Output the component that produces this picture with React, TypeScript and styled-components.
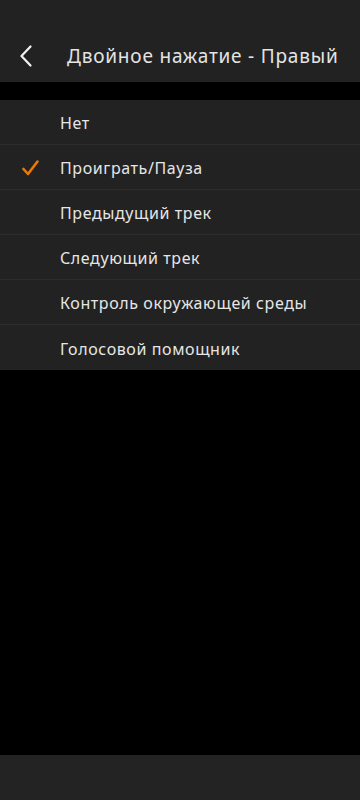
import React from "react";
import styled, { createGlobalStyle } from "styled-components";

const GlobalStyle = createGlobalStyle`
  html, body {
    margin: 0;
    padding: 0;
    background: #000;
  }
  body {
    font-family: "Noto Sans", "Open Sans", sans-serif;
    color: #e6e6e6;
  }
`;

const Screen = styled.div`
  width: 360px;
  height: 800px;
  display: flex;
  flex-direction: column;
  background: #000;
`;

const Header = styled.header`
  height: 82px;
  background: #222222;
  display: flex;
  align-items: flex-end;
  padding: 0 0 11px 0;
  box-sizing: border-box;
`;

const BackButton = styled.button`
  width: 50px;
  height: 30px;
  margin-left: 8px;
  background: none;
  border: none;
  padding: 0 0 0 12px;
  display: flex;
  align-items: center;
  justify-content: flex-start;
  cursor: pointer;
`;

const Title = styled.h1`
  margin: 0 0 0 9px;
  font-size: 19px;
  font-weight: 400;
  letter-spacing: 0.8px;
  color: #e4e4e4;
  line-height: 30px;
`;

const List = styled.ul`
  list-style: none;
  margin: 18px 0 0 0;
  padding: 0;
  background: #222222;
`;

const Row = styled.li<{ $last?: boolean }>`
  height: 45px;
  display: flex;
  align-items: center;
  box-sizing: border-box;
  padding-top: 2px;
  border-bottom: ${(p) => (p.$last ? "none" : "1px solid #2c2c2c")};
`;

const CheckSlot = styled.span`
  width: 60px;
  display: flex;
  justify-content: flex-start;
  padding-left: 22px;
  box-sizing: border-box;
`;

const Label = styled.span`
  font-size: 16px;
  letter-spacing: 0.6px;
  color: #e6e6e6;
`;

const Spacer = styled.div`
  flex: 1;
`;

const BottomBar = styled.footer`
  height: 45px;
  background: #232323;
`;

const options = [
  "Нет",
  "Проиграть/Пауза",
  "Предыдущий трек",
  "Следующий трек",
  "Контроль окружающей среды",
  "Голосовой помощник",
];

const selected = 1;

const App: React.FC = () => {
  return (
    <Screen>
      <GlobalStyle />
      <Header>
        <BackButton aria-label="Назад">
          <svg width="12" height="22" viewBox="0 0 12 22">
            <path
              d="M10.5 1.5 L1.5 11 L10.5 20.5"
              fill="none"
              stroke="#f2f2f2"
              strokeWidth="2.2"
              strokeLinecap="round"
              strokeLinejoin="round"
            />
          </svg>
        </BackButton>
        <Title>Двойное нажатие - Правый</Title>
      </Header>
      <List>
        {options.map((o, i) => (
          <Row key={o} $last={i === options.length - 1}>
            <CheckSlot>
              {i === selected && (
                <svg width="17" height="16" viewBox="0 0 17 16">
                  <path
                    d="M1.5 9 L6 14 L15.5 1.5"
                    fill="none"
                    stroke="#f07800"
                    strokeWidth="2.6"
                    strokeLinecap="round"
                    strokeLinejoin="round"
                  />
                </svg>
              )}
            </CheckSlot>
            <Label>{o}</Label>
          </Row>
        ))}
      </List>
      <Spacer />
      <BottomBar />
    </Screen>
  );
};

export default App;
